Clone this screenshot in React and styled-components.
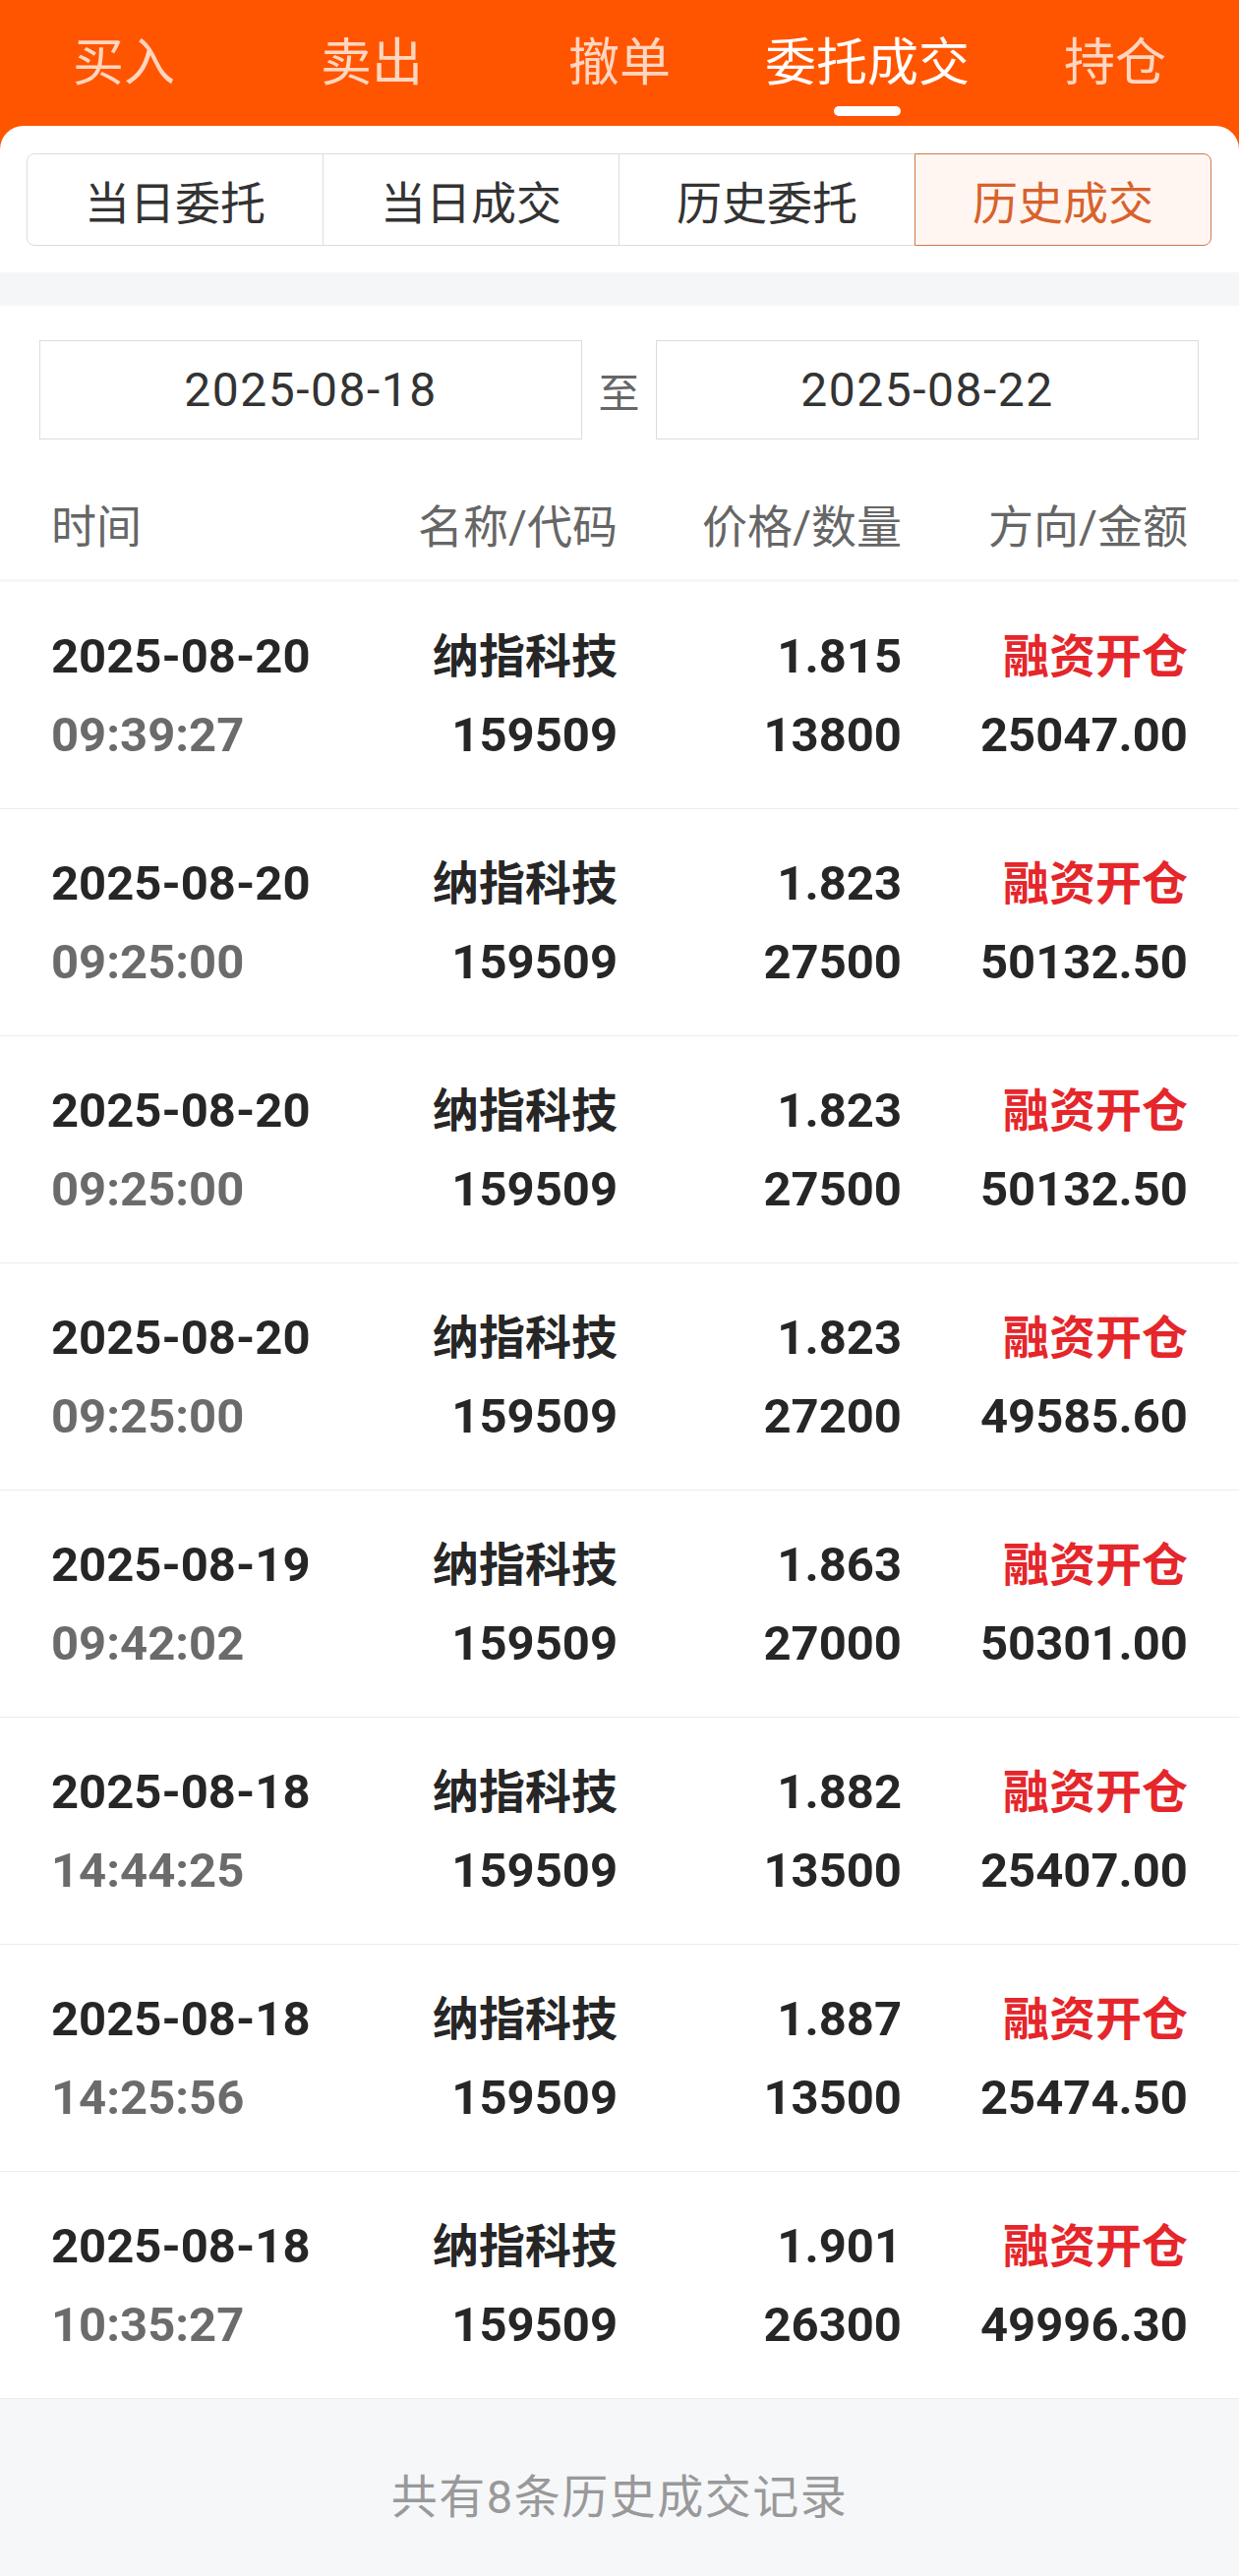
import React from 'react';
import styled, { createGlobalStyle } from 'styled-components';

const GlobalStyle = createGlobalStyle`
  body {
    margin: 0;
    background: #f6f7f9;
    font-family: Roboto, "Noto Sans CJK SC", sans-serif;
  }
`;

const Page = styled.div`
  width: 1260px;
  background: #ff5500;
`;

const TopNav = styled.div`
  display: grid;
  grid-template-columns: repeat(5, 1fr);
  height: 128px;
`;

const NavItem = styled.div`
  display: flex;
  flex-direction: column;
  align-items: center;
  padding-top: 35px;
  font-size: 52px;
  line-height: 60px;
  color: ${(p) => (p.$active ? '#ffffff' : '#ffd6c0')};

  &::after {
    content: '';
    display: ${(p) => (p.$active ? 'block' : 'none')};
    width: 68px;
    height: 10px;
    margin-top: 13px;
    border-radius: 5px;
    background: #fff;
  }
`;

const Card = styled.div`
  background: #fff;
  border-radius: 24px 24px 0 0;
  overflow: hidden;
`;

const SubTabs = styled.div`
  display: grid;
  grid-template-columns: repeat(4, 1fr);
  padding: 28px 28px 27px;
`;

const SubTab = styled.div`
  position: relative;
  z-index: ${(p) => (p.$active ? 1 : 0)};
  height: 92px;
  margin-left: -1px;
  display: flex;
  align-items: center;
  justify-content: center;
  font-size: 46px;
  color: ${(p) => (p.$active ? '#d8622c' : '#333')};
  background: ${(p) => (p.$active ? '#fff6f2' : '#fff')};
  border: 1px solid ${(p) => (p.$active ? '#cf7a4c' : '#dcdcdc')};

  &:first-child {
    border-radius: 8px 0 0 8px;
  }
  &:last-child {
    border-radius: 0 8px 8px 0;
  }
`;

const Band = styled.div`
  height: 34px;
  background: #f5f6f8;
`;

const DateRow = styled.div`
  display: flex;
  align-items: center;
  padding: 35px 41px 0 40px;
`;

const DateBox = styled.div`
  width: 550px;
  height: 99px;
  border: 1px solid #dcdcdc;
  display: flex;
  align-items: center;
  justify-content: center;
  font-size: 48px;
  letter-spacing: 1.5px;
  color: #333;
`;

const To = styled.div`
  flex: 1;
  text-align: center;
  font-size: 42px;
  color: #666;
`;

const Grid = styled.div`
  display: grid;
  grid-template-columns: 336px 240px 289px 291px;
  padding: 0 52px;
`;

const HeadRow = styled(Grid)`
  padding-top: 56px;
  padding-bottom: 20px;
  line-height: 66px;
  font-size: 46px;
  color: #666;
  border-bottom: 3px solid #f5f6f8;
`;

const HeadCell = styled.div`
  text-align: ${(p) => (p.$left ? 'left' : 'right')};
`;

const Row = styled(Grid)`
  padding-top: 36px;
  padding-bottom: 34px;
  border-bottom: 1px solid #ececec;
`;

const Cell = styled.div`
  display: flex;
  flex-direction: column;
  align-items: ${(p) => (p.$left ? 'flex-start' : 'flex-end')};
`;

const Line = styled.div`
  line-height: 80px;
  font-size: ${(p) => (p.$cjk ? '47px' : '49px')};
  font-weight: 700;
  color: ${(p) => p.$color || '#262626'};
  white-space: nowrap;
`;

const Footer = styled.div`
  height: 180px;
  padding-top: 68px;
  box-sizing: border-box;
  background: #f6f7f9;
  text-align: center;
  font-size: 47px;
  line-height: 64px;
  letter-spacing: 1.5px;
  color: #999;
`;

const navs = ['买入', '卖出', '撤单', '委托成交', '持仓'];
const subTabs = ['当日委托', '当日成交', '历史委托', '历史成交'];

const trades = [
  ['2025-08-20', '09:39:27', '1.815', '13800', '25047.00'],
  ['2025-08-20', '09:25:00', '1.823', '27500', '50132.50'],
  ['2025-08-20', '09:25:00', '1.823', '27500', '50132.50'],
  ['2025-08-20', '09:25:00', '1.823', '27200', '49585.60'],
  ['2025-08-19', '09:42:02', '1.863', '27000', '50301.00'],
  ['2025-08-18', '14:44:25', '1.882', '13500', '25407.00'],
  ['2025-08-18', '14:25:56', '1.887', '13500', '25474.50'],
  ['2025-08-18', '10:35:27', '1.901', '26300', '49996.30'],
];

function App() {
  return (
    <Page>
      <GlobalStyle />
      <TopNav>
        {navs.map((n) => (
          <NavItem key={n} $active={n === '委托成交'}>{n}</NavItem>
        ))}
      </TopNav>

      <Card>
        <SubTabs>
          {subTabs.map((t) => (
            <SubTab key={t} $active={t === '历史成交'}>{t}</SubTab>
          ))}
        </SubTabs>
        <Band />

        <DateRow>
          <DateBox>2025-08-18</DateBox>
          <To>至</To>
          <DateBox>2025-08-22</DateBox>
        </DateRow>

        <HeadRow>
          <HeadCell $left>时间</HeadCell>
          <HeadCell>名称/代码</HeadCell>
          <HeadCell>价格/数量</HeadCell>
          <HeadCell>方向/金额</HeadCell>
        </HeadRow>

        {trades.map(([date, time, price, qty, amount], i) => (
          <Row key={i}>
            <Cell $left>
              <Line>{date}</Line>
              <Line $color="#6b6b6b">{time}</Line>
            </Cell>
            <Cell>
              <Line $cjk>纳指科技</Line>
              <Line>159509</Line>
            </Cell>
            <Cell>
              <Line>{price}</Line>
              <Line>{qty}</Line>
            </Cell>
            <Cell>
              <Line $cjk $color="#e5262b">融资开仓</Line>
              <Line>{amount}</Line>
            </Cell>
          </Row>
        ))}

        <Footer>共有8条历史成交记录</Footer>
      </Card>
    </Page>
  );
}

export default App;
